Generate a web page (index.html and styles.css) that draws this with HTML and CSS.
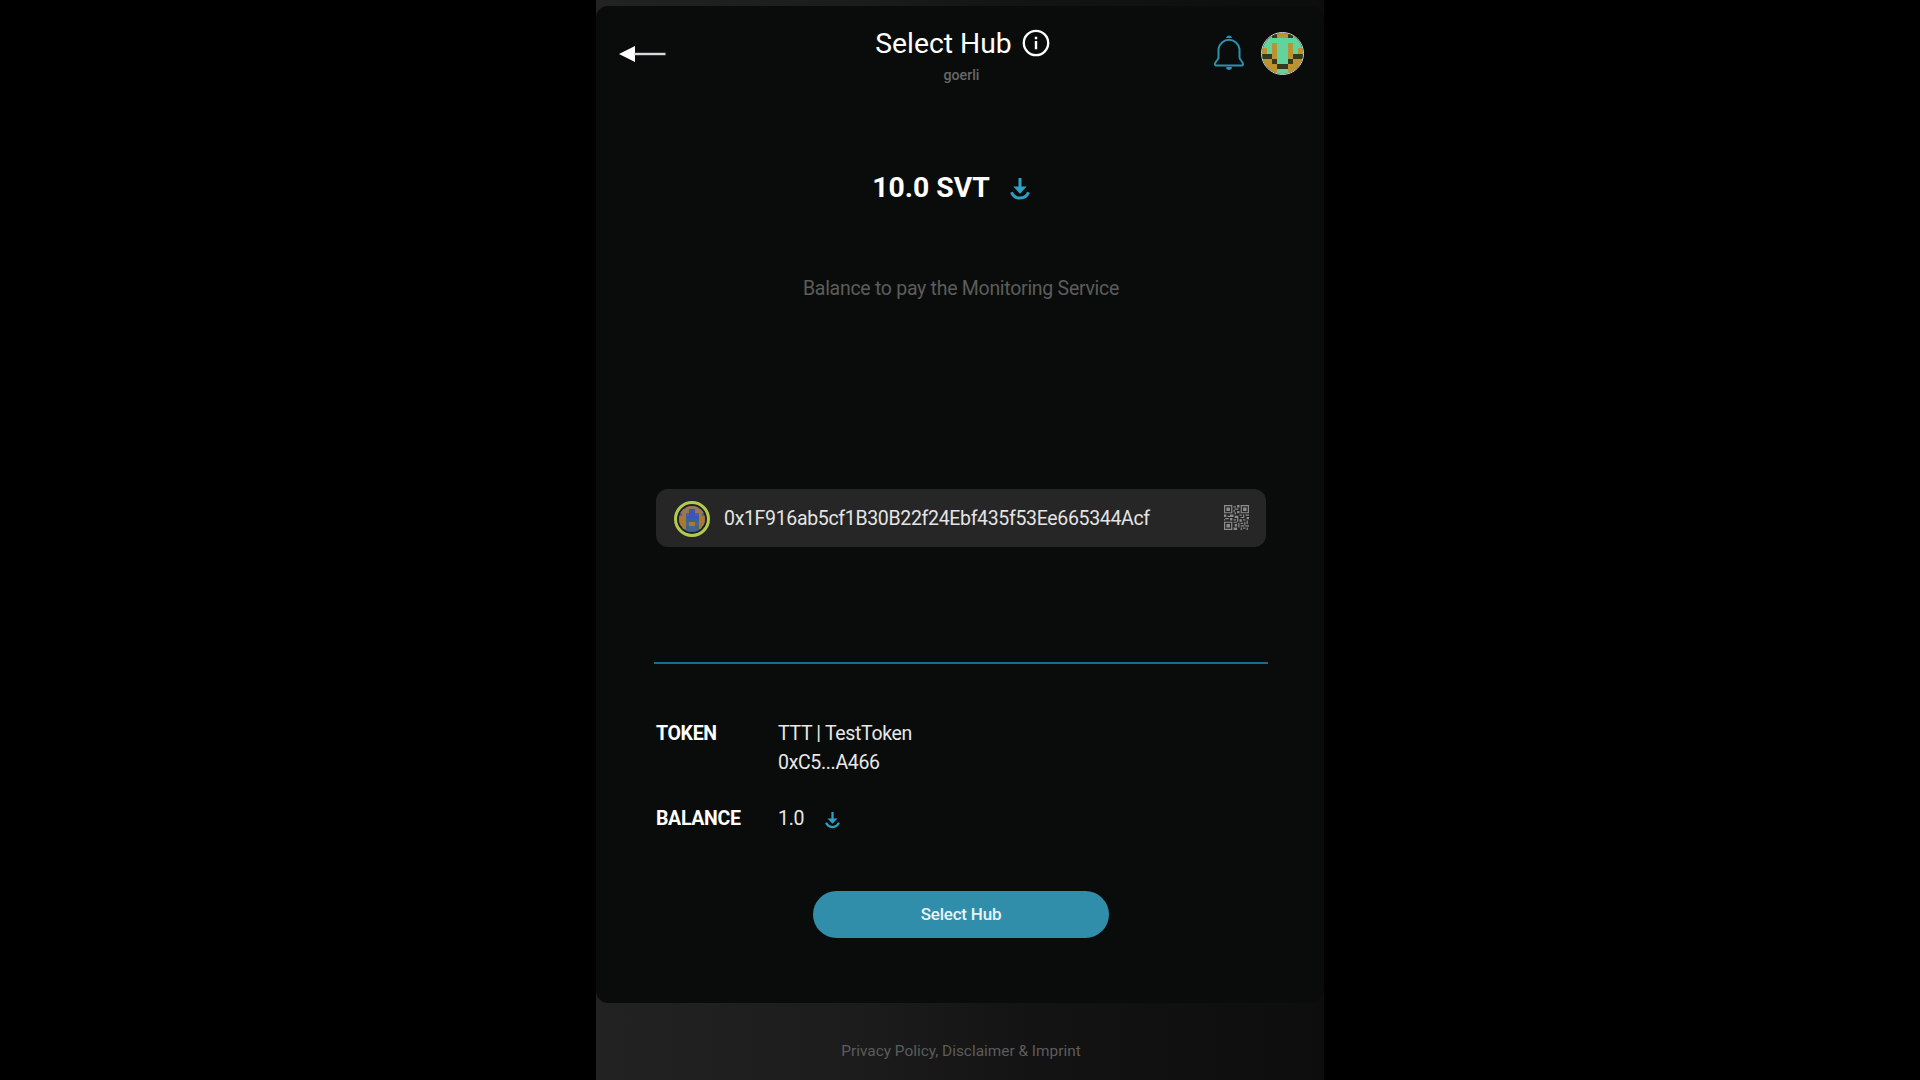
FILE: index.html
```
<!DOCTYPE html>
<html lang="en">
<head>
<meta charset="utf-8">
<title>Select Hub</title>
<link rel="stylesheet" href="styles.css">
</head>
<body>
<div class="app">
  <main class="card">
    <header class="header">
      <svg class="back" viewBox="0 0 48 18"><path d="M0 9 16 1v16z" fill="#fff"/><path d="M15 9h31.500" stroke="#dcd8dc" stroke-width="2.400"/></svg>
      <div class="heading">
        <div class="title-row">
          <h1 class="title">Select Hub</h1>
          <svg class="info" viewBox="0 0 28 28" fill="none" stroke="#fff"><circle cx="14" cy="14" r="12.200" stroke-width="2.300"/><path d="M14 12v8.200M14 7.800v2.400" stroke-width="2.400"/></svg>
        </div>
        <div class="network">goerli</div>
      </div>
      <div class="tools">
        <svg class="bell" viewBox="0 0 30 36" fill="none" stroke="#2b91b0" stroke-width="2" stroke-linejoin="round"><path d="M4.500 22.500V14a10.600 10.600 0 0 1 21 0v8.500c0 2.800 3.500 3.500 3.500 6.500 0 1.100-.8 1.600-2 1.600H3c-1.200 0-2-.5-2-1.600 0-3 3.500-3.700 3.500-6.500z"/><path d="M12.500 3a2.500 2 0 0 1 5 0M12.500 32.500a2.500 2 0 0 0 5 0z" fill="#2b91b0" stroke-width="1"/></svg>
        <div class="avatar">
          <svg viewBox="0 0 8 8" shape-rendering="crispEdges"><path fill="#60d49c" d="M0 0h8v8H0z"/><path fill="#bd9232" d="M3 0h2v1H3zM2 2h1v3H2zM5 2h1v3H5zM0 3h1v1H0zM7 3h1v1H7zM0 5h2v1h1v2H0zM6 5h2v3H5V6h1z"/><path fill="#353920" d="M2 0h1v1H2zM5 0h1v1H5zM0 4h2v1H0zM6 4h2v1H6zM2 5h1v1H2zM5 5h1v1H5zM3 6h2v1H3z"/></svg>
        </div>
      </div>
    </header>

    <section class="deposit">
      <span class="amount">10.0 SVT</span>
      <svg class="download" viewBox="0 0 20 24"><path d="M8.500 0h3v8.500h5.200L10 15.800 3.300 8.500h5.200z" fill="#2ea0c4"/><path d="M1.500 14.300a9 8.600 0 0 0 17 0" fill="none" stroke="#2ea0c4" stroke-width="3"/></svg>
    </section>
    <p class="hint">Balance to pay the Monitoring Service</p>

    <div class="address-field">
      <div class="hub-avatar">
        <svg viewBox="0 0 8 8" shape-rendering="crispEdges"><path fill="#50609c" d="M0 0h8v8H0z"/><path fill="#9b764e" d="M2 0h4v1H2zM0 1h2v1H0zM6 1h2v1H6zM2 1h1v1H2zM5 1h1v1H5zM1 2h1v1H1zM6 2h1v1H6z"/><path fill="#a87a31" d="M0 3h2v3H0zM6 3h2v3H6zM1 6h1v1H1zM6 6h1v1H6zM3 5h2v1H3z"/><path fill="#35697b" d="M2 4h4v1H2zM2 6h1v1H2zM5 6h1v1H5zM3 7h2v1H3z"/><path fill="#3d56b5" d="M3 1h2v3H3zM2 3h1v1H2zM5 3h1v1H5z"/></svg>
      </div>
      <span class="address">0x1F916ab5cf1B30B22f24Ebf435f53Ee665344Acf</span>
      <svg class="qr" viewBox="0 0 21 21" fill="#8c8c8c"><path fill-rule="evenodd" d="M0 0h7v7H0zM1 1v5h5V1zM14 0h7v7h-7zM15 1v5h5V1zM0 14h7v7H0zM1 15v5h5v-5z"/><path d="M2 2h3v3H2zM16 2h3v3h-3zM2 16h3v3H2zM8 1h2v1H8zM11 0h2v2h-2zM9 3h3v1H9zM8 4h1v2H8zM11 5h2v2h-2zM9 6h1v2H9zM0 8h2v2H0zM3 9h2v1H3zM5 8h3v2H5zM9 9h3v2H9zM13 8h2v1h-2zM16 8h1v2h-1zM18 8h3v1h-3zM14 10h3v1h-3zM19 10h2v2h-2zM1 11h3v1H1zM0 12h1v1H0zM5 11h2v2H5zM8 12h2v1H8zM11 11h1v3h-1zM13 12h2v2h-2zM16 12h2v1h-2zM8 14h3v1H8zM9 16h2v2H9zM12 15h1v4h-1zM14 15h2v1h-2zM17 14h1v3h-1zM19 13h1v3h-1zM14 17h3v1h-3zM18 17h3v1h-3zM8 19h3v2H8zM14 19h1v2h-1zM16 19h2v1h-2zM19 19h1v2h-1z"/></svg>
    </div>

    <hr class="divider">

    <dl class="details">
      <dt>TOKEN</dt>
      <dd>TTT | TestToken<br>0xC5...A466</dd>
      <dt>BALANCE</dt>
      <dd class="balance">1.0
        <svg class="download-small" viewBox="0 0 20 24"><path d="M8.500 0h3v8.500h5.200L10 15.800 3.300 8.500h5.200z" fill="#2ea0c4"/><path d="M1.500 14.300a9 8.600 0 0 0 17 0" fill="none" stroke="#2ea0c4" stroke-width="3"/></svg>
      </dd>
    </dl>

    <button class="select-button" type="button">Select Hub</button>
  </main>
  <footer class="footer">Privacy Policy, Disclaimer &amp; Imprint</footer>
</div>
</body>
</html>
```
FILE: styles.css
```
* { box-sizing: border-box; }
body {
  margin: 0;
  height: 1080px;
  overflow: hidden;
  background: #000;
  color: #e8e8e8;
  font-family: Roboto, "Liberation Sans", sans-serif;
  font-size: 19.500px;
  letter-spacing: -0.330px;
}
svg { display: block; flex: none; }
.app {
  width: 728px;
  height: 1080px;
  margin: 0 auto;
  padding-top: 6px;
  background: linear-gradient(to right, #222 0%, #1c1c1c 35%, #131313 60%, #0d0d0d 100%);
}
.card {
  display: flex;
  flex-direction: column;
  align-items: center;
  height: 997px;
  padding-left: 2px;
  border-radius: 12px;
  background: #0a0c0b;
}
.header {
  display: grid;
  grid-template-columns: 110px 1fr 110px;
  width: 100%;
  height: 94px;
  padding: 0 20px 0 21px;
  letter-spacing: 0;
}
.back { width: 48px; height: 18px; margin-top: 39px; }
.heading { text-align: center; padding-top: 20px; }
.title-row { display: flex; justify-content: center; align-items: center; gap: 10px; height: 33px; padding-left: 2px; }
.title { margin: 2px 0 0; font-size: 28.300px; font-weight: 400; line-height: 33px; color: #fff; }
.info { width: 28px; height: 28px; }
.network { margin-top: 7px; font-size: 14.200px; line-height: 18px; font-weight: 500; color: #686868; }
.tools { display: flex; justify-content: flex-end; gap: 17px; }
.bell { width: 30px; height: 36px; margin-top: 29px; }
.avatar {
  width: 43px;
  height: 43px;
  margin-top: 26px;
  border: 1.500px solid #ddd8d0;
  border-radius: 50%;
  overflow: hidden;
}
.deposit { display: flex; align-items: center; gap: 20px; height: 40px; margin-top: 67px; padding-right: 20px; }
.amount { font-size: 28.300px; font-weight: 700; letter-spacing: 0; color: #fff; }
.download { width: 20px; height: 24px; margin-top: 6px; }
.hint { margin: 70px 0 0; line-height: 24px; letter-spacing: -0.280px; color: #5c5c5c; }
.address-field {
  display: flex;
  align-items: center;
  width: 610px;
  height: 58px;
  margin-top: 188px;
  padding: 0 17px 0 18px;
  border-radius: 12px;
  background: #262626;
}
.hub-avatar {
  width: 36px;
  height: 36px;
  margin-top: 2px;
  padding: 2px;
  border: 3px solid #b4ca4c;
  border-radius: 50%;
  background: #22232a;
}
.hub-avatar svg { border-radius: 50%; }
.address { margin: 1px 0 0 14px; color: #e4e4e4; }
.qr { width: 25px; height: 25px; margin: 0 0 1px auto; }
.divider { width: 614px; height: 2px; margin: 115px 0 0; border: 0; background: #117389; }
.details {
  display: grid;
  grid-template-columns: 122px 1fr;
  row-gap: 28px;
  width: 610px;
  margin: 56px 0 0;
  line-height: 28.500px;
}
.details dt { font-weight: 700; color: #fff; }
.details dd { margin: 0; }
.balance { display: flex; align-items: center; gap: 21px; }
.download-small { width: 15px; height: 18px; margin-top: 3px; }
.select-button {
  width: 296px;
  height: 47px;
  margin-top: 57px;
  padding: 0;
  border: 0;
  border-radius: 24px;
  background: #318eaa;
  color: #e8f4f8;
  font-family: inherit;
  font-size: 17px;
  font-weight: 500;
  letter-spacing: -0.200px;
}
.footer { padding: 38px 0 0 2px; text-align: center; font-size: 15.400px; line-height: 20px; letter-spacing: 0; color: #5c5c5c; }
```
